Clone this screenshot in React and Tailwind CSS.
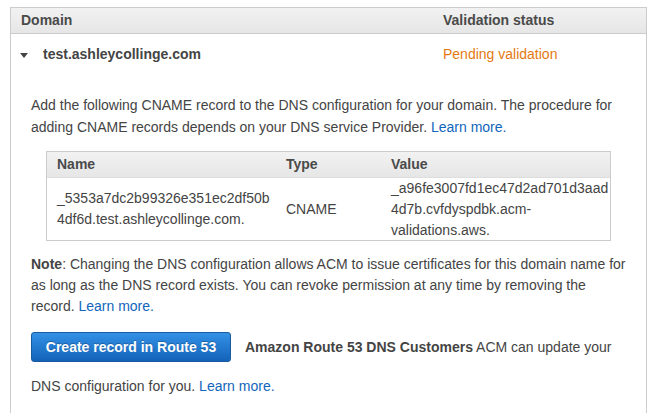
const LearnMore = () => (
  <a href="#" className="text-[#1166bb] hover:underline">Learn more.</a>
);

const App = () => {
  return (
    <div className="w-[658px] h-[413px] overflow-hidden bg-white font-['Liberation_Sans',Arial,sans-serif] text-[14px] text-[#444]">
      <div className="ml-[10px] mt-[7px] w-[637px] h-[420px] border border-b-0 border-[#cccccc]">
        {/* table header */}
        <div className="flex items-center h-[26px] border-b border-[#cccccc] bg-gradient-to-b from-[#f2f2f2] to-[#e6e6e6] font-bold text-[#4a4a4a]">
          <div className="pl-[10px] w-[432px]">Domain</div>
          <div>Validation status</div>
        </div>

        {/* domain row */}
        <div className="flex items-center pt-[10px] leading-[20px]">
          <div className="w-[432px] flex items-center">
            <span className="ml-[9px] mr-[15px] w-0 h-0 border-l-[4px] border-r-[4px] border-t-[5px] border-l-transparent border-r-transparent border-t-[#444] mt-[2px]" />
            <span className="font-bold">test.ashleycollinge.com</span>
          </div>
          <div className="text-[#e47911]">Pending validation</div>
        </div>

        {/* expanded content */}
        <div className="px-[20px]">
          <p className="mt-[30px] leading-[22px]">
            Add the following CNAME record to the DNS configuration for your domain. The procedure for<br />
            adding CNAME records depends on your DNS service Provider. <LearnMore />
          </p>

          <div className="mt-[13px] ml-[15px] w-[565px] border border-[#cccccc]">
            <div className="flex items-center h-[25px] bg-gradient-to-b from-[#f2f2f2] to-[#e6e6e6] font-bold text-[#4a4a4a]">
              <div className="w-[239px] pl-[10px]">Name</div>
              <div className="w-[105px]">Type</div>
              <div>Value</div>
            </div>
            <div className="flex items-center h-[63px] leading-[21px] border-t border-[#dddddd]">
              <div className="w-[239px] pl-[10px]">
                _5353a7dc2b99326e351ec2df50b<br />4df6d.test.ashleycollinge.com.
              </div>
              <div className="w-[105px]">CNAME</div>
              <div className="whitespace-nowrap">
                _a96fe3007fd1ec47d2ad701d3aad<br />4d7b.cvfdyspdbk.acm-<br />validations.aws.
              </div>
            </div>
          </div>

          <p className="mt-[13px] leading-[21px]">
            <span className="font-bold">Note</span>: Changing the DNS configuration allows ACM to issue certificates for this domain name for<br />
            as long as the DNS record exists. You can revoke permission at any time by removing the<br />
            record. <LearnMore />
          </p>

          <div className="flex items-center mt-[15px]">
            <button className="w-[200px] h-[30px] rounded-[3px] border border-[#1a5a9e] bg-gradient-to-b from-[#3391e6] to-[#1263b8] text-white font-bold text-[14px] [text-shadow:0_-1px_0_rgba(0,0,0,0.25)]">
              Create record in Route 53
            </button>
            <span className="ml-[14px]">
              <span className="font-bold">Amazon Route 53 DNS Customers</span> ACM can update your
            </span>
          </div>
          <p className="mt-[13px] leading-[22px]">
            DNS configuration for you. <LearnMore />
          </p>
        </div>
      </div>
    </div>
  );
};

export default App;
